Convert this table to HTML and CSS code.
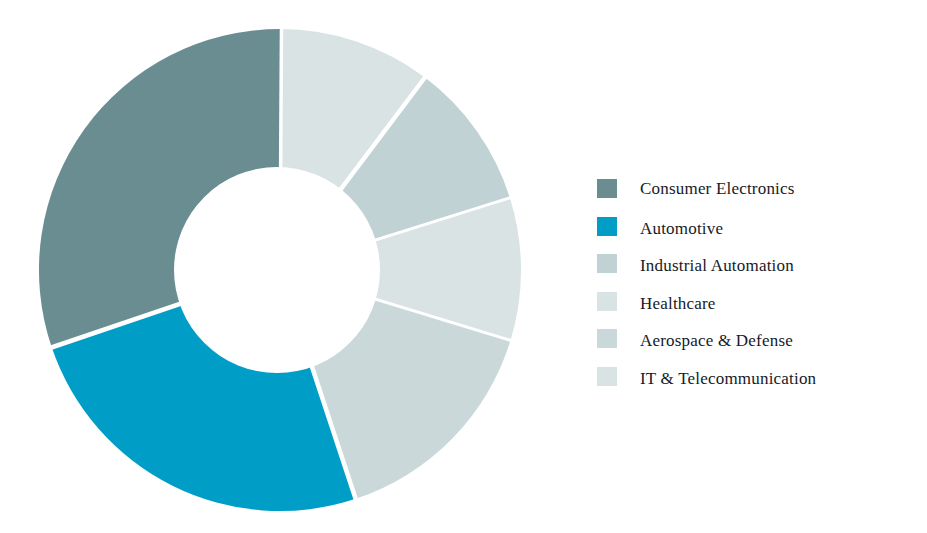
FILE: index.html
```html
<!DOCTYPE html>
<html lang="en">
<head>
<meta charset="utf-8">
<title>Industry breakdown</title>
<link rel="stylesheet" href="styles.css">
</head>
<body>
<main class="page">
  <svg class="donut" width="560" height="533" viewBox="0 0 560 533" aria-label="Donut chart">
    <path class="seg seg-it" d="M280 270 L280 29 A241 241 0 0 1 425.0 77.5 Z"/>
    <path class="seg seg-ind" d="M280 270 L425.0 77.5 A241 241 0 0 1 509.8 197.5 Z"/>
    <path class="seg seg-health" d="M280 270 L509.8 197.5 A241 241 0 0 1 510.5 340.5 Z"/>
    <path class="seg seg-aero" d="M280 270 L510.5 340.5 A241 241 0 0 1 355.7 498.8 Z"/>
    <path class="seg seg-auto" d="M280 270 L355.7 498.8 A241 241 0 0 1 51.7 347.3 Z"/>
    <path class="seg seg-ce" d="M280 270 L51.7 347.3 A241 241 0 0 1 280 29 Z"/>
    <g class="gaps">
      <line x1="280" y1="270" x2="281.5" y2="25" stroke-width="3.5"/>
      <line x1="280" y1="270" x2="427.5" y2="74" stroke-width="4.5"/>
      <line x1="280" y1="270" x2="514" y2="196.5" stroke-width="3"/>
      <line x1="280" y1="270" x2="514" y2="341.5" stroke-width="3"/>
      <line x1="280" y1="270" x2="357" y2="503" stroke-width="4.5"/>
      <line x1="280" y1="270" x2="47" y2="349" stroke-width="4.5"/>
    </g>
    <circle class="hole" cx="277" cy="270" r="103"/>
  </svg>
  <ul class="legend">
    <li class="legend-item"><span class="swatch sw-ce"></span><span class="label">Consumer Electronics</span></li>
    <li class="legend-item"><span class="swatch sw-auto"></span><span class="label">Automotive</span></li>
    <li class="legend-item"><span class="swatch sw-ind"></span><span class="label">Industrial Automation</span></li>
    <li class="legend-item"><span class="swatch sw-health"></span><span class="label">Healthcare</span></li>
    <li class="legend-item"><span class="swatch sw-aero"></span><span class="label">Aerospace &amp; Defense</span></li>
    <li class="legend-item"><span class="swatch sw-it"></span><span class="label">IT &amp; Telecommunication</span></li>
  </ul>
</main>
</body>
</html>
```
FILE: styles.css
```css
html, body {
  margin: 0;
  padding: 0;
  background: #ffffff;
}

.page {
  width: 927px;
  height: 533px;
  display: flex;
  align-items: flex-start;
  overflow: hidden;
}

.donut {
  display: block;
  flex: none;
}

.seg-ce { fill: #6a8d92; }
.seg-auto { fill: #009ec6; }
.seg-ind { fill: #c1d2d5; }
.seg-health { fill: #d9e3e4; }
.seg-aero { fill: #cad8da; }
.seg-it { fill: #d9e3e4; }

.gaps line {
  stroke: #ffffff;
  stroke-linecap: butt;
}

.hole { fill: #ffffff; }

.legend {
  list-style: none;
  margin: 0;
  padding: 179px 0 0 37px;
  display: flex;
  flex-direction: column;
  gap: 18.5px;
}

.legend-item {
  display: flex;
  align-items: center;
  height: 19px;
  gap: 23px;
}

.swatch {
  width: 20px;
  height: 19px;
  flex: none;
}

.sw-ce { background: #6a8d92; }
.sw-auto { background: #009ec6; }
.sw-ind { background: #c1d2d5; }
.sw-health { background: #d9e3e4; }
.sw-aero { background: #cad8da; }
.sw-it { background: #d9e3e4; }

.label {
  font-family: "Liberation Serif", "Times New Roman", serif;
  font-size: 17px;
  color: #161a28;
  letter-spacing: 0.2px;
  white-space: nowrap;
  line-height: 19px;
  padding-top: 4px;
}

.legend-item:first-child .label {
  padding-top: 0;
}
```
